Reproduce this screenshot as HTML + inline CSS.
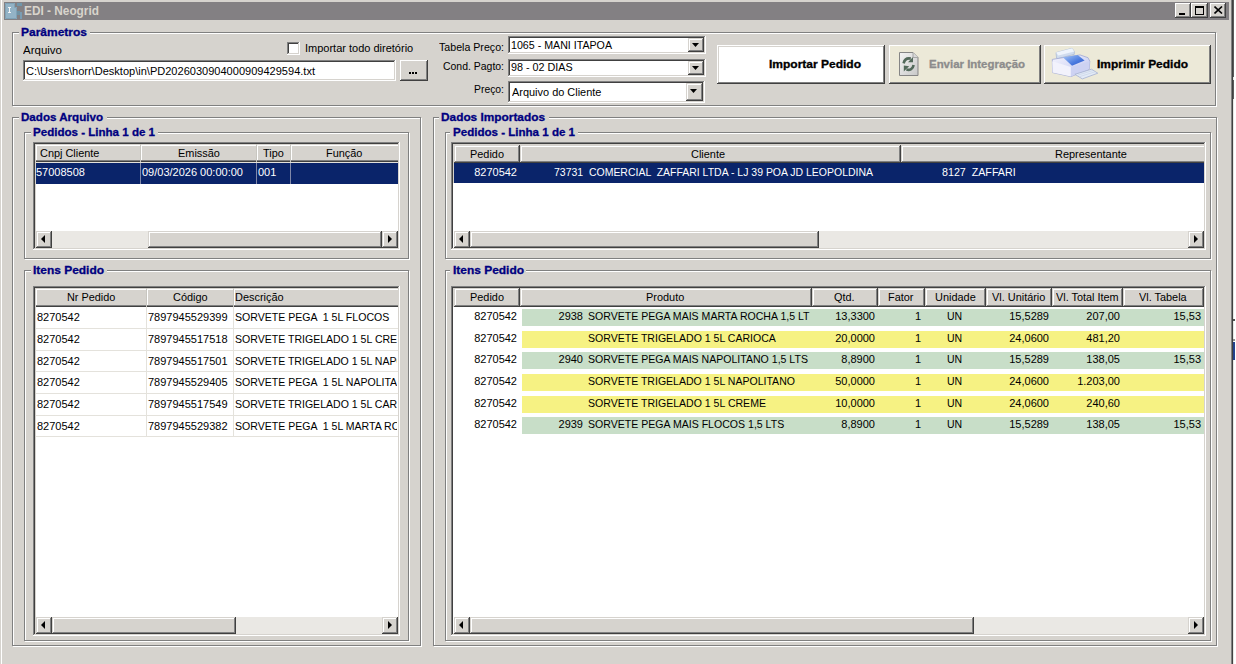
<!DOCTYPE html>
<html><head><meta charset="utf-8"><style>
html,body{margin:0;padding:0;width:1236px;height:664px;overflow:hidden;background:#D6D3CE;}
body div,body span{position:absolute;}
.t{font-family:"Liberation Sans",sans-serif;white-space:pre;}
</style></head><body>
<div style="left:0px;top:0px;width:1236px;height:664px;background:#D6D3CE;"></div>
<div style="left:0px;top:0px;width:1px;height:664px;background:#D6D3CE;"></div>
<div style="left:1px;top:0px;width:1px;height:664px;background:#FFFFFF;"></div>
<div style="left:1231px;top:0px;width:1px;height:664px;background:#808080;"></div>
<div style="left:1232px;top:0px;width:1px;height:664px;background:#404040;"></div>
<div style="left:1233px;top:0px;width:3px;height:664px;background:#FFFFFF;"></div>
<div style="left:1233px;top:0px;width:1px;height:664px;background:#E8E8E4;"></div>
<div style="left:1233px;top:0px;width:1px;height:77px;background:#5A5A5A;"></div>
<div style="left:1233px;top:80px;width:1px;height:19px;background:#5A5A5A;"></div>
<div style="left:1233px;top:319px;width:2px;height:2px;background:#505050;"></div>
<div style="left:1233px;top:339px;width:2px;height:2px;background:#909090;"></div>
<div style="left:1233px;top:342px;width:2px;height:18px;background:#23418C;"></div>
<div style="left:4px;top:2px;width:1225px;height:18px;background:#838083;"></div>
<svg style="position:absolute;left:4px;top:2px" width="20" height="18"><path d="M1 1H11V5H13V17H1Z" fill="#93B3C6"/><path d="M1.5 1.5H10.5V5.5H12.5V16.5H1.5Z" fill="none" stroke="#7FA2B6" stroke-width="1"/><rect x="13" y="1" width="5" height="3" fill="#7096AA"/><rect x="13" y="9" width="3" height="4" fill="#6F92A4"/><rect x="16" y="10" width="2" height="7" fill="#7A9CB2"/><path d="M4 5H7V6H6V10H7V11H4V10H5V6H4Z" fill="#F2F4F6"/></svg>
<span class="t" style="left:24.00px;top:5px;font-size:12px;line-height:12px;font-weight:bold;-webkit-text-stroke:0.3px #D8D4CC;color:#D8D4CC;transform:scaleX(0.9866);transform-origin:0 0;-webkit-text-stroke:0;">EDI - Neogrid</span>
<div style="left:1175px;top:3px;width:16px;height:15px;background:#D6D3CE;"></div>
<div style="left:1175px;top:3px;width:16px;height:1px;background:#FFFFFF;"></div>
<div style="left:1175px;top:3px;width:1px;height:15px;background:#FFFFFF;"></div>
<div style="left:1175px;top:17px;width:16px;height:1px;background:#404040;"></div>
<div style="left:1190px;top:3px;width:1px;height:15px;background:#404040;"></div>
<div style="left:1176px;top:4px;width:14px;height:1px;background:#D6D3CE;"></div>
<div style="left:1176px;top:4px;width:1px;height:13px;background:#D6D3CE;"></div>
<div style="left:1176px;top:16px;width:14px;height:1px;background:#808080;"></div>
<div style="left:1189px;top:4px;width:1px;height:13px;background:#808080;"></div>
<div style="left:1191px;top:3px;width:17px;height:15px;background:#D6D3CE;"></div>
<div style="left:1191px;top:3px;width:17px;height:1px;background:#FFFFFF;"></div>
<div style="left:1191px;top:3px;width:1px;height:15px;background:#FFFFFF;"></div>
<div style="left:1191px;top:17px;width:17px;height:1px;background:#404040;"></div>
<div style="left:1207px;top:3px;width:1px;height:15px;background:#404040;"></div>
<div style="left:1192px;top:4px;width:15px;height:1px;background:#D6D3CE;"></div>
<div style="left:1192px;top:4px;width:1px;height:13px;background:#D6D3CE;"></div>
<div style="left:1192px;top:16px;width:15px;height:1px;background:#808080;"></div>
<div style="left:1206px;top:4px;width:1px;height:13px;background:#808080;"></div>
<div style="left:1210px;top:3px;width:16px;height:15px;background:#D6D3CE;"></div>
<div style="left:1210px;top:3px;width:16px;height:1px;background:#FFFFFF;"></div>
<div style="left:1210px;top:3px;width:1px;height:15px;background:#FFFFFF;"></div>
<div style="left:1210px;top:17px;width:16px;height:1px;background:#404040;"></div>
<div style="left:1225px;top:3px;width:1px;height:15px;background:#404040;"></div>
<div style="left:1211px;top:4px;width:14px;height:1px;background:#D6D3CE;"></div>
<div style="left:1211px;top:4px;width:1px;height:13px;background:#D6D3CE;"></div>
<div style="left:1211px;top:16px;width:14px;height:1px;background:#808080;"></div>
<div style="left:1224px;top:4px;width:1px;height:13px;background:#808080;"></div>
<div style="left:1179px;top:13px;width:6px;height:2px;background:#000;"></div>
<div style="left:1195px;top:6px;width:9px;height:1px;background:#000;"></div>
<div style="left:1195px;top:6px;width:1px;height:9px;background:#000;"></div>
<div style="left:1195px;top:14px;width:9px;height:1px;background:#000;"></div>
<div style="left:1203px;top:6px;width:1px;height:9px;background:#000;"></div>
<div style="left:1195px;top:7px;width:9px;height:1px;background:#000;"></div>
<svg style="position:absolute;left:1214px;top:6px" width="9" height="8"><path d="M0.5 0.5L8 7.5M8 0.5L0.5 7.5" stroke="#000" stroke-width="1.6"/></svg>
<div style="left:13px;top:33px;width:1204px;height:1px;background:#FFFFFF;"></div>
<div style="left:13px;top:33px;width:1px;height:74px;background:#FFFFFF;"></div>
<div style="left:13px;top:106px;width:1204px;height:1px;background:#FFFFFF;"></div>
<div style="left:1216px;top:33px;width:1px;height:74px;background:#FFFFFF;"></div>
<div style="left:12px;top:32px;width:1204px;height:1px;background:#808080;"></div>
<div style="left:12px;top:32px;width:1px;height:74px;background:#808080;"></div>
<div style="left:12px;top:105px;width:1204px;height:1px;background:#808080;"></div>
<div style="left:1215px;top:32px;width:1px;height:74px;background:#808080;"></div>
<div style="left:13px;top:33px;width:1202px;height:1px;background:#FFFFFF;"></div>
<div style="left:13px;top:33px;width:1px;height:72px;background:#FFFFFF;"></div>
<div style="left:19px;top:27px;width:71px;height:10px;background:#D6D3CE;"></div>
<span class="t" style="left:21.00px;top:27px;font-size:11px;line-height:11px;font-weight:bold;-webkit-text-stroke:0.3px #000080;color:#000080;transform:scaleX(1.0901);transform-origin:0 0;">Parâmetros</span>
<span class="t" style="left:23.00px;top:45px;font-size:11px;line-height:11px;transform:scaleX(1.0457);transform-origin:0 0;">Arquivo</span>
<div style="left:287px;top:42px;width:13px;height:13px;background:#FFFFFF;"></div>
<div style="left:287px;top:42px;width:13px;height:1px;background:#808080;"></div>
<div style="left:287px;top:42px;width:1px;height:13px;background:#808080;"></div>
<div style="left:287px;top:54px;width:13px;height:1px;background:#FFFFFF;"></div>
<div style="left:299px;top:42px;width:1px;height:13px;background:#FFFFFF;"></div>
<div style="left:288px;top:43px;width:11px;height:1px;background:#404040;"></div>
<div style="left:288px;top:43px;width:1px;height:11px;background:#404040;"></div>
<div style="left:288px;top:53px;width:11px;height:1px;background:#D6D3CE;"></div>
<div style="left:298px;top:43px;width:1px;height:11px;background:#D6D3CE;"></div>
<span class="t" style="left:305.00px;top:43px;font-size:11px;line-height:11px;">Importar todo diretório</span>
<div style="left:23px;top:60px;width:373px;height:21px;background:#FFFFFF;"></div>
<div style="left:23px;top:60px;width:373px;height:1px;background:#808080;"></div>
<div style="left:23px;top:60px;width:1px;height:21px;background:#808080;"></div>
<div style="left:23px;top:80px;width:373px;height:1px;background:#FFFFFF;"></div>
<div style="left:395px;top:60px;width:1px;height:21px;background:#FFFFFF;"></div>
<div style="left:24px;top:61px;width:371px;height:1px;background:#404040;"></div>
<div style="left:24px;top:61px;width:1px;height:19px;background:#404040;"></div>
<div style="left:24px;top:79px;width:371px;height:1px;background:#D6D3CE;"></div>
<div style="left:394px;top:61px;width:1px;height:19px;background:#D6D3CE;"></div>
<span class="t" style="left:26.00px;top:66px;font-size:11px;line-height:11px;transform:scaleX(1.0034);transform-origin:0 0;">C:\Users\horr\Desktop\in\PD2026030904000909429594.txt</span>
<div style="left:400px;top:60px;width:28px;height:21px;background:#D6D3CE;"></div>
<div style="left:400px;top:60px;width:28px;height:1px;background:#FFFFFF;"></div>
<div style="left:400px;top:60px;width:1px;height:21px;background:#FFFFFF;"></div>
<div style="left:400px;top:80px;width:28px;height:1px;background:#404040;"></div>
<div style="left:427px;top:60px;width:1px;height:21px;background:#404040;"></div>
<div style="left:401px;top:61px;width:26px;height:1px;background:#D6D3CE;"></div>
<div style="left:401px;top:61px;width:1px;height:19px;background:#D6D3CE;"></div>
<div style="left:401px;top:79px;width:26px;height:1px;background:#808080;"></div>
<div style="left:426px;top:61px;width:1px;height:19px;background:#808080;"></div>
<div style="left:409px;top:72px;width:2px;height:2px;background:#000;"></div>
<div style="left:412px;top:72px;width:2px;height:2px;background:#000;"></div>
<div style="left:415px;top:72px;width:2px;height:2px;background:#000;"></div>
<span class="t" style="left:439.00px;top:42px;font-size:11px;line-height:11px;transform:scaleX(0.9663);transform-origin:0 0;">Tabela Preço:</span>
<span class="t" style="left:443.00px;top:61px;font-size:11px;line-height:11px;transform:scaleX(0.9499);transform-origin:0 0;">Cond. Pagto:</span>
<span class="t" style="left:474.00px;top:84px;font-size:11px;line-height:11px;transform:scaleX(0.9435);transform-origin:0 0;">Preço:</span>
<div style="left:508px;top:36px;width:198px;height:18px;background:#FFFFFF;"></div>
<div style="left:508px;top:36px;width:198px;height:1px;background:#808080;"></div>
<div style="left:508px;top:36px;width:1px;height:18px;background:#808080;"></div>
<div style="left:508px;top:53px;width:198px;height:1px;background:#FFFFFF;"></div>
<div style="left:705px;top:36px;width:1px;height:18px;background:#FFFFFF;"></div>
<div style="left:509px;top:37px;width:196px;height:1px;background:#404040;"></div>
<div style="left:509px;top:37px;width:1px;height:16px;background:#404040;"></div>
<div style="left:509px;top:52px;width:196px;height:1px;background:#D6D3CE;"></div>
<div style="left:704px;top:37px;width:1px;height:16px;background:#D6D3CE;"></div>
<div style="left:688px;top:38px;width:16px;height:14px;background:#D6D3CE;"></div>
<div style="left:688px;top:38px;width:16px;height:1px;background:#D6D3CE;"></div>
<div style="left:688px;top:38px;width:1px;height:14px;background:#D6D3CE;"></div>
<div style="left:688px;top:51px;width:16px;height:1px;background:#404040;"></div>
<div style="left:703px;top:38px;width:1px;height:14px;background:#404040;"></div>
<div style="left:689px;top:39px;width:14px;height:1px;background:#FFFFFF;"></div>
<div style="left:689px;top:39px;width:1px;height:12px;background:#FFFFFF;"></div>
<div style="left:689px;top:50px;width:14px;height:1px;background:#808080;"></div>
<div style="left:702px;top:39px;width:1px;height:12px;background:#808080;"></div>
<svg style="position:absolute;left:692px;top:43px" width="7" height="4"><path d="M0 0H7L3.5 4Z" fill="#000"/></svg>
<span class="t" style="left:511.00px;top:40px;font-size:11px;line-height:11px;transform:scaleX(0.9681);transform-origin:0 0;">1065 - MANI ITAPOA</span>
<div style="left:508px;top:59px;width:198px;height:18px;background:#FFFFFF;"></div>
<div style="left:508px;top:59px;width:198px;height:1px;background:#808080;"></div>
<div style="left:508px;top:59px;width:1px;height:18px;background:#808080;"></div>
<div style="left:508px;top:76px;width:198px;height:1px;background:#FFFFFF;"></div>
<div style="left:705px;top:59px;width:1px;height:18px;background:#FFFFFF;"></div>
<div style="left:509px;top:60px;width:196px;height:1px;background:#404040;"></div>
<div style="left:509px;top:60px;width:1px;height:16px;background:#404040;"></div>
<div style="left:509px;top:75px;width:196px;height:1px;background:#D6D3CE;"></div>
<div style="left:704px;top:60px;width:1px;height:16px;background:#D6D3CE;"></div>
<div style="left:688px;top:61px;width:16px;height:14px;background:#D6D3CE;"></div>
<div style="left:688px;top:61px;width:16px;height:1px;background:#D6D3CE;"></div>
<div style="left:688px;top:61px;width:1px;height:14px;background:#D6D3CE;"></div>
<div style="left:688px;top:74px;width:16px;height:1px;background:#404040;"></div>
<div style="left:703px;top:61px;width:1px;height:14px;background:#404040;"></div>
<div style="left:689px;top:62px;width:14px;height:1px;background:#FFFFFF;"></div>
<div style="left:689px;top:62px;width:1px;height:12px;background:#FFFFFF;"></div>
<div style="left:689px;top:73px;width:14px;height:1px;background:#808080;"></div>
<div style="left:702px;top:62px;width:1px;height:12px;background:#808080;"></div>
<svg style="position:absolute;left:692px;top:66px" width="7" height="4"><path d="M0 0H7L3.5 4Z" fill="#000"/></svg>
<span class="t" style="left:511.00px;top:62px;font-size:11px;line-height:11px;transform:scaleX(0.9800);transform-origin:0 0;">98 - 02 DIAS</span>
<div style="left:508px;top:81px;width:197px;height:22px;background:#FFFFFF;"></div>
<div style="left:508px;top:81px;width:197px;height:1px;background:#808080;"></div>
<div style="left:508px;top:81px;width:1px;height:22px;background:#808080;"></div>
<div style="left:508px;top:102px;width:197px;height:1px;background:#FFFFFF;"></div>
<div style="left:704px;top:81px;width:1px;height:22px;background:#FFFFFF;"></div>
<div style="left:509px;top:82px;width:195px;height:1px;background:#404040;"></div>
<div style="left:509px;top:82px;width:1px;height:20px;background:#404040;"></div>
<div style="left:509px;top:101px;width:195px;height:1px;background:#D6D3CE;"></div>
<div style="left:703px;top:82px;width:1px;height:20px;background:#D6D3CE;"></div>
<div style="left:686px;top:83px;width:17px;height:18px;background:#D6D3CE;"></div>
<div style="left:686px;top:83px;width:17px;height:1px;background:#D6D3CE;"></div>
<div style="left:686px;top:83px;width:1px;height:18px;background:#D6D3CE;"></div>
<div style="left:686px;top:100px;width:17px;height:1px;background:#404040;"></div>
<div style="left:702px;top:83px;width:1px;height:18px;background:#404040;"></div>
<div style="left:687px;top:84px;width:15px;height:1px;background:#FFFFFF;"></div>
<div style="left:687px;top:84px;width:1px;height:16px;background:#FFFFFF;"></div>
<div style="left:687px;top:99px;width:15px;height:1px;background:#808080;"></div>
<div style="left:701px;top:84px;width:1px;height:16px;background:#808080;"></div>
<svg style="position:absolute;left:690px;top:89px" width="7" height="4"><path d="M0 0H7L3.5 4Z" fill="#000"/></svg>
<span class="t" style="left:512.00px;top:87px;font-size:11px;line-height:11px;transform:scaleX(0.9944);transform-origin:0 0;">Arquivo do Cliente</span>
<div style="left:717px;top:45px;width:168px;height:39px;background:#FFFFFF;"></div>
<div style="left:717px;top:45px;width:168px;height:1px;background:#FFFFFF;"></div>
<div style="left:717px;top:45px;width:1px;height:39px;background:#FFFFFF;"></div>
<div style="left:717px;top:83px;width:168px;height:1px;background:#404040;"></div>
<div style="left:884px;top:45px;width:1px;height:39px;background:#404040;"></div>
<div style="left:718px;top:46px;width:166px;height:1px;background:#D6D3CE;"></div>
<div style="left:718px;top:46px;width:1px;height:37px;background:#D6D3CE;"></div>
<div style="left:718px;top:82px;width:166px;height:1px;background:#808080;"></div>
<div style="left:883px;top:46px;width:1px;height:37px;background:#808080;"></div>
<span class="t" style="left:769.00px;top:59px;font-size:11px;line-height:11px;font-weight:bold;-webkit-text-stroke:0.3px #000;transform:scaleX(1.0908);transform-origin:0 0;">Importar Pedido</span>
<div style="left:889px;top:45px;width:152px;height:39px;background:#ECE9D8;"></div>
<div style="left:889px;top:45px;width:152px;height:1px;background:#FFFFFF;"></div>
<div style="left:889px;top:45px;width:1px;height:39px;background:#FFFFFF;"></div>
<div style="left:889px;top:83px;width:152px;height:1px;background:#404040;"></div>
<div style="left:1040px;top:45px;width:1px;height:39px;background:#404040;"></div>
<div style="left:890px;top:46px;width:150px;height:1px;background:#ECE9D8;"></div>
<div style="left:890px;top:46px;width:1px;height:37px;background:#ECE9D8;"></div>
<div style="left:890px;top:82px;width:150px;height:1px;background:#808080;"></div>
<div style="left:1039px;top:46px;width:1px;height:37px;background:#808080;"></div>
<span class="t" style="left:929.00px;top:59px;font-size:11px;line-height:11px;font-weight:bold;-webkit-text-stroke:0.3px #8C8C8C;color:#8C8C8C;transform:scaleX(1.0398);transform-origin:0 0;">Enviar Integração</span>
<div style="left:1044px;top:45px;width:167px;height:39px;background:#ECE9D8;"></div>
<div style="left:1044px;top:45px;width:167px;height:1px;background:#FFFFFF;"></div>
<div style="left:1044px;top:45px;width:1px;height:39px;background:#FFFFFF;"></div>
<div style="left:1044px;top:83px;width:167px;height:1px;background:#404040;"></div>
<div style="left:1210px;top:45px;width:1px;height:39px;background:#404040;"></div>
<div style="left:1045px;top:46px;width:165px;height:1px;background:#ECE9D8;"></div>
<div style="left:1045px;top:46px;width:1px;height:37px;background:#ECE9D8;"></div>
<div style="left:1045px;top:82px;width:165px;height:1px;background:#808080;"></div>
<div style="left:1209px;top:46px;width:1px;height:37px;background:#808080;"></div>
<span class="t" style="left:1097.00px;top:59px;font-size:11px;line-height:11px;font-weight:bold;-webkit-text-stroke:0.3px #000;transform:scaleX(1.0866);transform-origin:0 0;">Imprimir Pedido</span>
<svg style="position:absolute;left:894px;top:48px" width="30" height="32"><defs><linearGradient id="dg" x1="0" y1="0" x2="1" y2="1"><stop offset="0" stop-color="#F4F4F4"/><stop offset="1" stop-color="#C8C8C8"/></linearGradient></defs><path d="M5.5 4.5H19L24 9.5V27.5H5.5Z" fill="url(#dg)" stroke="#858585"/><path d="M19 4.5V9.5H24" fill="#D8D8D8" stroke="#9A9A9A" stroke-width="0.8"/><path d="M9.6 15.4C10.5 11.5 13.5 10 16.8 10.6" stroke="#52695A" stroke-width="2.6" fill="none"/><path d="M14 14.2L19 9V14.2Z" fill="#52695A"/><path d="M19.6 17C19 21 16 22.6 12.4 21.6" stroke="#52695A" stroke-width="2.6" fill="none"/><path d="M9.8 17.6V23.6L15.2 18.3Z" fill="#52695A"/></svg>
<svg style="position:absolute;left:1050px;top:46px" width="50" height="36"><defs><linearGradient id="pb" x1="0" y1="0" x2="1" y2="1"><stop offset="0" stop-color="#F6F6FE"/><stop offset="1" stop-color="#BCC2EE"/></linearGradient><linearGradient id="pbl" x1="0" y1="0" x2="1" y2="1"><stop offset="0" stop-color="#A8C8F6"/><stop offset="0.6" stop-color="#4C7CE0"/><stop offset="1" stop-color="#2A56C8"/></linearGradient></defs><path d="M6 6.6L22 2.3L24.3 5.4L24.3 8.3L8.3 12.5L6.6 12.3Z" fill="#D0DCEE" stroke="#A8B8D4" stroke-width="0.7"/><path d="M6 6.6L22 2.3L24.3 5.4L8.3 9.4Z" fill="#EEF4FC"/><path d="M2.3 13.4L30 8.9L38 11.7L39.8 15.2L39.2 23.2L20.9 30.6L2.6 26.6Z" fill="url(#pb)" stroke="#A0A8D4" stroke-width="0.8"/><path d="M2.3 15.2L20.9 20.9L20.9 30.6L2.6 26.6Z" fill="#F2F2FC"/><path d="M20.9 20.9L39.6 15.2L39.2 23.2L20.9 30.6Z" fill="#CDD2F2"/><path d="M12.9 11.2L27.7 8.9L34.6 14.6L22 19.7Z" fill="url(#pbl)"/><path d="M24.9 28.3L41.5 23.2L47.8 27.2L32.3 32.9Z" fill="#E2EAF6" stroke="#A4B0D0" stroke-width="0.8"/><path d="M28 29L43 24.5M30 30.5L45 25.8" stroke="#C4D0E4" stroke-width="0.6"/></svg>
<div style="left:13px;top:118px;width:409px;height:1px;background:#FFFFFF;"></div>
<div style="left:13px;top:118px;width:1px;height:529px;background:#FFFFFF;"></div>
<div style="left:13px;top:646px;width:409px;height:1px;background:#FFFFFF;"></div>
<div style="left:421px;top:118px;width:1px;height:529px;background:#FFFFFF;"></div>
<div style="left:12px;top:117px;width:409px;height:1px;background:#808080;"></div>
<div style="left:12px;top:117px;width:1px;height:529px;background:#808080;"></div>
<div style="left:12px;top:645px;width:409px;height:1px;background:#808080;"></div>
<div style="left:420px;top:117px;width:1px;height:529px;background:#808080;"></div>
<div style="left:13px;top:118px;width:407px;height:1px;background:#FFFFFF;"></div>
<div style="left:13px;top:118px;width:1px;height:527px;background:#FFFFFF;"></div>
<div style="left:19px;top:112px;width:88px;height:10px;background:#D6D3CE;"></div>
<span class="t" style="left:21.00px;top:112px;font-size:11px;line-height:11px;font-weight:bold;-webkit-text-stroke:0.3px #000080;color:#000080;transform:scaleX(1.0536);transform-origin:0 0;">Dados Arquivo</span>
<div style="left:25px;top:133px;width:385px;height:1px;background:#FFFFFF;"></div>
<div style="left:25px;top:133px;width:1px;height:127px;background:#FFFFFF;"></div>
<div style="left:25px;top:259px;width:385px;height:1px;background:#FFFFFF;"></div>
<div style="left:409px;top:133px;width:1px;height:127px;background:#FFFFFF;"></div>
<div style="left:24px;top:132px;width:385px;height:1px;background:#808080;"></div>
<div style="left:24px;top:132px;width:1px;height:127px;background:#808080;"></div>
<div style="left:24px;top:258px;width:385px;height:1px;background:#808080;"></div>
<div style="left:408px;top:132px;width:1px;height:127px;background:#808080;"></div>
<div style="left:25px;top:133px;width:383px;height:1px;background:#FFFFFF;"></div>
<div style="left:25px;top:133px;width:1px;height:125px;background:#FFFFFF;"></div>
<div style="left:31px;top:127px;width:127px;height:10px;background:#D6D3CE;"></div>
<span class="t" style="left:33.00px;top:127px;font-size:11px;line-height:11px;font-weight:bold;-webkit-text-stroke:0.3px #000080;color:#000080;transform:scaleX(1.0505);transform-origin:0 0;">Pedidos - Linha 1 de 1</span>
<div style="left:25px;top:271px;width:385px;height:1px;background:#FFFFFF;"></div>
<div style="left:25px;top:271px;width:1px;height:371px;background:#FFFFFF;"></div>
<div style="left:25px;top:641px;width:385px;height:1px;background:#FFFFFF;"></div>
<div style="left:409px;top:271px;width:1px;height:371px;background:#FFFFFF;"></div>
<div style="left:24px;top:270px;width:385px;height:1px;background:#808080;"></div>
<div style="left:24px;top:270px;width:1px;height:371px;background:#808080;"></div>
<div style="left:24px;top:640px;width:385px;height:1px;background:#808080;"></div>
<div style="left:408px;top:270px;width:1px;height:371px;background:#808080;"></div>
<div style="left:25px;top:271px;width:383px;height:1px;background:#FFFFFF;"></div>
<div style="left:25px;top:271px;width:1px;height:369px;background:#FFFFFF;"></div>
<div style="left:31px;top:265px;width:76px;height:10px;background:#D6D3CE;"></div>
<span class="t" style="left:33.00px;top:265px;font-size:11px;line-height:11px;font-weight:bold;-webkit-text-stroke:0.3px #000080;color:#000080;transform:scaleX(1.0855);transform-origin:0 0;">Itens Pedido</span>
<div style="left:434px;top:118px;width:784px;height:1px;background:#FFFFFF;"></div>
<div style="left:434px;top:118px;width:1px;height:529px;background:#FFFFFF;"></div>
<div style="left:434px;top:646px;width:784px;height:1px;background:#FFFFFF;"></div>
<div style="left:1217px;top:118px;width:1px;height:529px;background:#FFFFFF;"></div>
<div style="left:433px;top:117px;width:784px;height:1px;background:#808080;"></div>
<div style="left:433px;top:117px;width:1px;height:529px;background:#808080;"></div>
<div style="left:433px;top:645px;width:784px;height:1px;background:#808080;"></div>
<div style="left:1216px;top:117px;width:1px;height:529px;background:#808080;"></div>
<div style="left:434px;top:118px;width:782px;height:1px;background:#FFFFFF;"></div>
<div style="left:434px;top:118px;width:1px;height:527px;background:#FFFFFF;"></div>
<div style="left:439px;top:112px;width:110px;height:10px;background:#D6D3CE;"></div>
<span class="t" style="left:441.00px;top:112px;font-size:11px;line-height:11px;font-weight:bold;-webkit-text-stroke:0.3px #000080;color:#000080;transform:scaleX(1.0768);transform-origin:0 0;">Dados Importados</span>
<div style="left:446px;top:133px;width:766px;height:1px;background:#FFFFFF;"></div>
<div style="left:446px;top:133px;width:1px;height:127px;background:#FFFFFF;"></div>
<div style="left:446px;top:259px;width:766px;height:1px;background:#FFFFFF;"></div>
<div style="left:1211px;top:133px;width:1px;height:127px;background:#FFFFFF;"></div>
<div style="left:445px;top:132px;width:766px;height:1px;background:#808080;"></div>
<div style="left:445px;top:132px;width:1px;height:127px;background:#808080;"></div>
<div style="left:445px;top:258px;width:766px;height:1px;background:#808080;"></div>
<div style="left:1210px;top:132px;width:1px;height:127px;background:#808080;"></div>
<div style="left:446px;top:133px;width:764px;height:1px;background:#FFFFFF;"></div>
<div style="left:446px;top:133px;width:1px;height:125px;background:#FFFFFF;"></div>
<div style="left:450px;top:127px;width:128px;height:10px;background:#D6D3CE;"></div>
<span class="t" style="left:453.00px;top:127px;font-size:11px;line-height:11px;font-weight:bold;-webkit-text-stroke:0.3px #000080;color:#000080;transform:scaleX(1.0505);transform-origin:0 0;">Pedidos - Linha 1 de 1</span>
<div style="left:446px;top:271px;width:766px;height:1px;background:#FFFFFF;"></div>
<div style="left:446px;top:271px;width:1px;height:371px;background:#FFFFFF;"></div>
<div style="left:446px;top:641px;width:766px;height:1px;background:#FFFFFF;"></div>
<div style="left:1211px;top:271px;width:1px;height:371px;background:#FFFFFF;"></div>
<div style="left:445px;top:270px;width:766px;height:1px;background:#808080;"></div>
<div style="left:445px;top:270px;width:1px;height:371px;background:#808080;"></div>
<div style="left:445px;top:640px;width:766px;height:1px;background:#808080;"></div>
<div style="left:1210px;top:270px;width:1px;height:371px;background:#808080;"></div>
<div style="left:446px;top:271px;width:764px;height:1px;background:#FFFFFF;"></div>
<div style="left:446px;top:271px;width:1px;height:369px;background:#FFFFFF;"></div>
<div style="left:450px;top:265px;width:76px;height:10px;background:#D6D3CE;"></div>
<span class="t" style="left:453.00px;top:265px;font-size:11px;line-height:11px;font-weight:bold;-webkit-text-stroke:0.3px #000080;color:#000080;transform:scaleX(1.0855);transform-origin:0 0;">Itens Pedido</span>
<div style="left:33px;top:142px;width:367px;height:108px;background:#FFFFFF;"></div>
<div style="left:33px;top:142px;width:367px;height:1px;background:#808080;"></div>
<div style="left:33px;top:142px;width:1px;height:108px;background:#808080;"></div>
<div style="left:33px;top:249px;width:367px;height:1px;background:#FFFFFF;"></div>
<div style="left:399px;top:142px;width:1px;height:108px;background:#FFFFFF;"></div>
<div style="left:34px;top:143px;width:365px;height:1px;background:#404040;"></div>
<div style="left:34px;top:143px;width:1px;height:106px;background:#404040;"></div>
<div style="left:34px;top:248px;width:365px;height:1px;background:#D6D3CE;"></div>
<div style="left:398px;top:143px;width:1px;height:106px;background:#D6D3CE;"></div>
<div style="left:35px;top:144px;width:1px;height:104px;background:#D6D3CE;"></div>
<div style="left:35px;top:144px;width:363px;height:1px;background:#D6D3CE;"></div>
<div style="left:36px;top:144px;width:362px;height:18px;background:#D6D3CE;"></div>
<div style="left:36px;top:145px;width:362px;height:1px;background:#FFFFFF;"></div>
<div style="left:36px;top:145px;width:1px;height:15px;background:#FFFFFF;"></div>
<div style="left:36px;top:160px;width:362px;height:1px;background:#808080;"></div>
<div style="left:36px;top:161px;width:362px;height:1px;background:#404040;"></div>
<div style="left:140px;top:144px;width:1px;height:18px;background:#C8C6C0;"></div>
<div style="left:141px;top:145px;width:1px;height:15px;background:#FFFFFF;"></div>
<div style="left:256px;top:144px;width:1px;height:18px;background:#C8C6C0;"></div>
<div style="left:257px;top:145px;width:1px;height:15px;background:#FFFFFF;"></div>
<div style="left:290px;top:144px;width:1px;height:18px;background:#C8C6C0;"></div>
<div style="left:291px;top:145px;width:1px;height:15px;background:#FFFFFF;"></div>
<div style="left:36px;top:162px;width:362px;height:1px;background:#E4E2DC;"></div>
<span class="t" style="left:40.00px;top:148px;font-size:11px;line-height:11px;transform:scaleX(0.9918);transform-origin:0 0;">Cnpj Cliente</span>
<span class="t" style="left:178.04px;top:148px;font-size:11px;line-height:11px;transform:scaleX(0.9936);transform-origin:0 0;">Emissão</span>
<span class="t" style="left:263.00px;top:148px;font-size:11px;line-height:11px;transform:scaleX(0.9888);transform-origin:0 0;">Tipo</span>
<span class="t" style="left:325.79px;top:148px;font-size:11px;line-height:11px;transform:scaleX(0.9925);transform-origin:0 0;">Função</span>
<div style="left:36px;top:163px;width:362px;height:21px;background:#0A246A;"></div>
<div style="left:140px;top:163px;width:1px;height:21px;background:#8088A8;"></div>
<div style="left:256px;top:163px;width:1px;height:21px;background:#8088A8;"></div>
<div style="left:290px;top:163px;width:1px;height:21px;background:#8088A8;"></div>
<span class="t" style="left:36.00px;top:167px;font-size:11px;line-height:11px;color:#FFFFFF;">57008508</span>
<span class="t" style="left:142.00px;top:167px;font-size:11px;line-height:11px;color:#FFFFFF;">09/03/2026 00:00:00</span>
<span class="t" style="left:258.00px;top:167px;font-size:11px;line-height:11px;color:#FFFFFF;">001</span>
<div style="left:36px;top:231px;width:362px;height:17px;background:#EAE8E4"></div>
<div style="left:36px;top:231px;width:16px;height:17px;background:#D6D3CE;"></div>
<div style="left:36px;top:231px;width:16px;height:1px;background:#D6D3CE;"></div>
<div style="left:36px;top:231px;width:1px;height:17px;background:#D6D3CE;"></div>
<div style="left:36px;top:247px;width:16px;height:1px;background:#404040;"></div>
<div style="left:51px;top:231px;width:1px;height:17px;background:#404040;"></div>
<div style="left:37px;top:232px;width:14px;height:1px;background:#FFFFFF;"></div>
<div style="left:37px;top:232px;width:1px;height:15px;background:#FFFFFF;"></div>
<div style="left:37px;top:246px;width:14px;height:1px;background:#808080;"></div>
<div style="left:50px;top:232px;width:1px;height:15px;background:#808080;"></div>
<svg style="position:absolute;left:41px;top:235px" width="5" height="8"><path d="M4 0V8L0 4Z" fill="#000"/></svg>
<div style="left:382px;top:231px;width:16px;height:17px;background:#D6D3CE;"></div>
<div style="left:382px;top:231px;width:16px;height:1px;background:#D6D3CE;"></div>
<div style="left:382px;top:231px;width:1px;height:17px;background:#D6D3CE;"></div>
<div style="left:382px;top:247px;width:16px;height:1px;background:#404040;"></div>
<div style="left:397px;top:231px;width:1px;height:17px;background:#404040;"></div>
<div style="left:383px;top:232px;width:14px;height:1px;background:#FFFFFF;"></div>
<div style="left:383px;top:232px;width:1px;height:15px;background:#FFFFFF;"></div>
<div style="left:383px;top:246px;width:14px;height:1px;background:#808080;"></div>
<div style="left:396px;top:232px;width:1px;height:15px;background:#808080;"></div>
<svg style="position:absolute;left:388px;top:235px" width="5" height="8"><path d="M0 0V8L4 4Z" fill="#000"/></svg>
<div style="left:148px;top:231px;width:234px;height:17px;background:#D6D3CE;"></div>
<div style="left:148px;top:231px;width:234px;height:1px;background:#D6D3CE;"></div>
<div style="left:148px;top:231px;width:1px;height:17px;background:#D6D3CE;"></div>
<div style="left:148px;top:247px;width:234px;height:1px;background:#404040;"></div>
<div style="left:381px;top:231px;width:1px;height:17px;background:#404040;"></div>
<div style="left:149px;top:232px;width:232px;height:1px;background:#FFFFFF;"></div>
<div style="left:149px;top:232px;width:1px;height:15px;background:#FFFFFF;"></div>
<div style="left:149px;top:246px;width:232px;height:1px;background:#808080;"></div>
<div style="left:380px;top:232px;width:1px;height:15px;background:#808080;"></div>
<div style="left:33px;top:286px;width:367px;height:350px;background:#FFFFFF;"></div>
<div style="left:33px;top:286px;width:367px;height:1px;background:#808080;"></div>
<div style="left:33px;top:286px;width:1px;height:350px;background:#808080;"></div>
<div style="left:33px;top:635px;width:367px;height:1px;background:#FFFFFF;"></div>
<div style="left:399px;top:286px;width:1px;height:350px;background:#FFFFFF;"></div>
<div style="left:34px;top:287px;width:365px;height:1px;background:#404040;"></div>
<div style="left:34px;top:287px;width:1px;height:348px;background:#404040;"></div>
<div style="left:34px;top:634px;width:365px;height:1px;background:#D6D3CE;"></div>
<div style="left:398px;top:287px;width:1px;height:348px;background:#D6D3CE;"></div>
<div style="left:35px;top:288px;width:1px;height:346px;background:#D6D3CE;"></div>
<div style="left:35px;top:633px;width:364px;height:1px;background:#D6D3CE;"></div>
<div style="left:35px;top:288px;width:363px;height:1px;background:#D6D3CE;"></div>
<div style="left:36px;top:288px;width:362px;height:19px;background:#D6D3CE;"></div>
<div style="left:36px;top:289px;width:362px;height:1px;background:#FFFFFF;"></div>
<div style="left:36px;top:289px;width:1px;height:16px;background:#FFFFFF;"></div>
<div style="left:36px;top:305px;width:362px;height:1px;background:#808080;"></div>
<div style="left:36px;top:306px;width:362px;height:1px;background:#404040;"></div>
<div style="left:146px;top:288px;width:1px;height:19px;background:#C8C6C0;"></div>
<div style="left:147px;top:289px;width:1px;height:16px;background:#FFFFFF;"></div>
<div style="left:233px;top:288px;width:1px;height:19px;background:#C8C6C0;"></div>
<div style="left:234px;top:289px;width:1px;height:16px;background:#FFFFFF;"></div>
<span class="t" style="left:66.81px;top:292px;font-size:11px;line-height:11px;transform:scaleX(0.9888);transform-origin:0 0;">Nr Pedido</span>
<span class="t" style="left:172.70px;top:292px;font-size:11px;line-height:11px;transform:scaleX(0.9925);transform-origin:0 0;">Código</span>
<span class="t" style="left:235.00px;top:292px;font-size:11px;line-height:11px;transform:scaleX(0.9950);transform-origin:0 0;">Descrição</span>
<div style="left:36px;top:328px;width:362px;height:1px;background:#E4E2DC;"></div>
<span class="t" style="left:37.00px;top:312px;font-size:11px;line-height:11px;">8270542</span>
<span class="t" style="left:148.00px;top:312px;font-size:11px;line-height:11px;">7897945529399</span>
<div style="left:234px;top:307px;width:163px;height:20px;overflow:hidden"><span class="t" style="left:1.00px;top:5px;font-size:11px;line-height:11px;transform:scaleX(0.9595);transform-origin:0 0;">SORVETE PEGA  1 5L FLOCOS</span></div>
<div style="left:36px;top:350px;width:362px;height:1px;background:#E4E2DC;"></div>
<span class="t" style="left:37.00px;top:334px;font-size:11px;line-height:11px;">8270542</span>
<span class="t" style="left:148.00px;top:334px;font-size:11px;line-height:11px;">7897945517518</span>
<div style="left:234px;top:329px;width:163px;height:20px;overflow:hidden"><span class="t" style="left:1.00px;top:5px;font-size:11px;line-height:11px;transform:scaleX(0.9587);transform-origin:0 0;">SORVETE TRIGELADO 1 5L CREME</span></div>
<div style="left:36px;top:371px;width:362px;height:1px;background:#E4E2DC;"></div>
<span class="t" style="left:37.00px;top:356px;font-size:11px;line-height:11px;">8270542</span>
<span class="t" style="left:148.00px;top:356px;font-size:11px;line-height:11px;">7897945517501</span>
<div style="left:234px;top:351px;width:163px;height:20px;overflow:hidden"><span class="t" style="left:1.00px;top:5px;font-size:11px;line-height:11px;transform:scaleX(0.9581);transform-origin:0 0;">SORVETE TRIGELADO 1 5L NAPOLITANO</span></div>
<div style="left:36px;top:393px;width:362px;height:1px;background:#E4E2DC;"></div>
<span class="t" style="left:37.00px;top:377px;font-size:11px;line-height:11px;">8270542</span>
<span class="t" style="left:148.00px;top:377px;font-size:11px;line-height:11px;">7897945529405</span>
<div style="left:234px;top:372px;width:163px;height:20px;overflow:hidden"><span class="t" style="left:1.00px;top:5px;font-size:11px;line-height:11px;transform:scaleX(0.9587);transform-origin:0 0;">SORVETE PEGA  1 5L NAPOLITANO</span></div>
<div style="left:36px;top:415px;width:362px;height:1px;background:#E4E2DC;"></div>
<span class="t" style="left:37.00px;top:399px;font-size:11px;line-height:11px;">8270542</span>
<span class="t" style="left:148.00px;top:399px;font-size:11px;line-height:11px;">7897945517549</span>
<div style="left:234px;top:394px;width:163px;height:20px;overflow:hidden"><span class="t" style="left:1.00px;top:5px;font-size:11px;line-height:11px;transform:scaleX(0.9585);transform-origin:0 0;">SORVETE TRIGELADO 1 5L CARIOCA</span></div>
<div style="left:36px;top:436px;width:362px;height:1px;background:#E4E2DC;"></div>
<span class="t" style="left:37.00px;top:421px;font-size:11px;line-height:11px;">8270542</span>
<span class="t" style="left:148.00px;top:421px;font-size:11px;line-height:11px;">7897945529382</span>
<div style="left:234px;top:416px;width:163px;height:20px;overflow:hidden"><span class="t" style="left:1.00px;top:5px;font-size:11px;line-height:11px;transform:scaleX(0.9587);transform-origin:0 0;">SORVETE PEGA  1 5L MARTA ROCHA</span></div>
<div style="left:146px;top:307px;width:1px;height:130px;background:#E4E2DC;"></div>
<div style="left:233px;top:307px;width:1px;height:130px;background:#E4E2DC;"></div>
<div style="left:36px;top:617px;width:362px;height:17px;background:#EAE8E4"></div>
<div style="left:36px;top:617px;width:16px;height:17px;background:#D6D3CE;"></div>
<div style="left:36px;top:617px;width:16px;height:1px;background:#D6D3CE;"></div>
<div style="left:36px;top:617px;width:1px;height:17px;background:#D6D3CE;"></div>
<div style="left:36px;top:633px;width:16px;height:1px;background:#404040;"></div>
<div style="left:51px;top:617px;width:1px;height:17px;background:#404040;"></div>
<div style="left:37px;top:618px;width:14px;height:1px;background:#FFFFFF;"></div>
<div style="left:37px;top:618px;width:1px;height:15px;background:#FFFFFF;"></div>
<div style="left:37px;top:632px;width:14px;height:1px;background:#808080;"></div>
<div style="left:50px;top:618px;width:1px;height:15px;background:#808080;"></div>
<svg style="position:absolute;left:41px;top:621px" width="5" height="8"><path d="M4 0V8L0 4Z" fill="#000"/></svg>
<div style="left:382px;top:617px;width:16px;height:17px;background:#D6D3CE;"></div>
<div style="left:382px;top:617px;width:16px;height:1px;background:#D6D3CE;"></div>
<div style="left:382px;top:617px;width:1px;height:17px;background:#D6D3CE;"></div>
<div style="left:382px;top:633px;width:16px;height:1px;background:#404040;"></div>
<div style="left:397px;top:617px;width:1px;height:17px;background:#404040;"></div>
<div style="left:383px;top:618px;width:14px;height:1px;background:#FFFFFF;"></div>
<div style="left:383px;top:618px;width:1px;height:15px;background:#FFFFFF;"></div>
<div style="left:383px;top:632px;width:14px;height:1px;background:#808080;"></div>
<div style="left:396px;top:618px;width:1px;height:15px;background:#808080;"></div>
<svg style="position:absolute;left:388px;top:621px" width="5" height="8"><path d="M0 0V8L4 4Z" fill="#000"/></svg>
<div style="left:52px;top:617px;width:184px;height:17px;background:#D6D3CE;"></div>
<div style="left:52px;top:617px;width:184px;height:1px;background:#D6D3CE;"></div>
<div style="left:52px;top:617px;width:1px;height:17px;background:#D6D3CE;"></div>
<div style="left:52px;top:633px;width:184px;height:1px;background:#404040;"></div>
<div style="left:235px;top:617px;width:1px;height:17px;background:#404040;"></div>
<div style="left:53px;top:618px;width:182px;height:1px;background:#FFFFFF;"></div>
<div style="left:53px;top:618px;width:1px;height:15px;background:#FFFFFF;"></div>
<div style="left:53px;top:632px;width:182px;height:1px;background:#808080;"></div>
<div style="left:234px;top:618px;width:1px;height:15px;background:#808080;"></div>
<div style="left:451px;top:142px;width:755px;height:108px;background:#FFFFFF;"></div>
<div style="left:451px;top:142px;width:755px;height:1px;background:#808080;"></div>
<div style="left:451px;top:142px;width:1px;height:108px;background:#808080;"></div>
<div style="left:451px;top:249px;width:755px;height:1px;background:#FFFFFF;"></div>
<div style="left:1205px;top:142px;width:1px;height:108px;background:#FFFFFF;"></div>
<div style="left:452px;top:143px;width:753px;height:1px;background:#404040;"></div>
<div style="left:452px;top:143px;width:1px;height:106px;background:#404040;"></div>
<div style="left:452px;top:248px;width:753px;height:1px;background:#D6D3CE;"></div>
<div style="left:1204px;top:143px;width:1px;height:106px;background:#D6D3CE;"></div>
<div style="left:453px;top:144px;width:751px;height:19px;background:#D6D3CE;"></div>
<div style="left:454px;top:145px;width:66px;height:18px;background:#D6D3CE;"></div>
<div style="left:454px;top:145px;width:66px;height:1px;background:#D6D3CE;"></div>
<div style="left:454px;top:145px;width:1px;height:18px;background:#D6D3CE;"></div>
<div style="left:454px;top:162px;width:66px;height:1px;background:#404040;"></div>
<div style="left:519px;top:145px;width:1px;height:18px;background:#404040;"></div>
<div style="left:455px;top:146px;width:64px;height:1px;background:#FFFFFF;"></div>
<div style="left:455px;top:146px;width:1px;height:16px;background:#FFFFFF;"></div>
<div style="left:455px;top:161px;width:64px;height:1px;background:#808080;"></div>
<div style="left:518px;top:146px;width:1px;height:16px;background:#808080;"></div>
<div style="left:520px;top:145px;width:381px;height:18px;background:#D6D3CE;"></div>
<div style="left:520px;top:145px;width:381px;height:1px;background:#D6D3CE;"></div>
<div style="left:520px;top:145px;width:1px;height:18px;background:#D6D3CE;"></div>
<div style="left:520px;top:162px;width:381px;height:1px;background:#404040;"></div>
<div style="left:900px;top:145px;width:1px;height:18px;background:#404040;"></div>
<div style="left:521px;top:146px;width:379px;height:1px;background:#FFFFFF;"></div>
<div style="left:521px;top:146px;width:1px;height:16px;background:#FFFFFF;"></div>
<div style="left:521px;top:161px;width:379px;height:1px;background:#808080;"></div>
<div style="left:899px;top:146px;width:1px;height:16px;background:#808080;"></div>
<div style="left:901px;top:145px;width:305px;height:18px;background:#D6D3CE;"></div>
<div style="left:901px;top:145px;width:305px;height:1px;background:#D6D3CE;"></div>
<div style="left:901px;top:145px;width:1px;height:18px;background:#D6D3CE;"></div>
<div style="left:901px;top:162px;width:305px;height:1px;background:#404040;"></div>
<div style="left:1205px;top:145px;width:1px;height:18px;background:#404040;"></div>
<div style="left:902px;top:146px;width:303px;height:1px;background:#FFFFFF;"></div>
<div style="left:902px;top:146px;width:1px;height:16px;background:#FFFFFF;"></div>
<div style="left:902px;top:161px;width:303px;height:1px;background:#808080;"></div>
<div style="left:1204px;top:146px;width:1px;height:16px;background:#808080;"></div>
<div style="left:1204px;top:144px;width:1px;height:105px;background:#D6D3CE;"></div>
<div style="left:1205px;top:142px;width:1px;height:108px;background:#FFFFFF;"></div>
<span class="t" style="left:470.00px;top:149px;font-size:11px;line-height:11px;transform:scaleX(0.9925);transform-origin:0 0;">Pedido</span>
<span class="t" style="left:690.99px;top:149px;font-size:11px;line-height:11px;transform:scaleX(0.9936);transform-origin:0 0;">Cliente</span>
<span class="t" style="left:1055.00px;top:149px;font-size:11px;line-height:11px;transform:scaleX(0.9965);transform-origin:0 0;">Representante</span>
<div style="left:453px;top:163px;width:751px;height:20px;background:#0A246A;"></div>
<div style="left:453px;top:163px;width:1px;height:20px;background:#D6D3CE;"></div>
<span class="t" style="left:474.17px;top:167px;font-size:11px;line-height:11px;color:#FFFFFF;">8270542</span>
<span class="t" style="left:554.00px;top:167px;font-size:11px;line-height:11px;color:#FFFFFF;transform:scaleX(0.9522);transform-origin:0 0;">73731  COMERCIAL  ZAFFARI LTDA - LJ 39 POA JD LEOPOLDINA</span>
<span class="t" style="left:942.00px;top:167px;font-size:11px;line-height:11px;color:#FFFFFF;transform:scaleX(0.9714);transform-origin:0 0;">8127  ZAFFARI</span>
<div style="left:454px;top:231px;width:750px;height:17px;background:#EAE8E4"></div>
<div style="left:454px;top:231px;width:16px;height:17px;background:#D6D3CE;"></div>
<div style="left:454px;top:231px;width:16px;height:1px;background:#D6D3CE;"></div>
<div style="left:454px;top:231px;width:1px;height:17px;background:#D6D3CE;"></div>
<div style="left:454px;top:247px;width:16px;height:1px;background:#404040;"></div>
<div style="left:469px;top:231px;width:1px;height:17px;background:#404040;"></div>
<div style="left:455px;top:232px;width:14px;height:1px;background:#FFFFFF;"></div>
<div style="left:455px;top:232px;width:1px;height:15px;background:#FFFFFF;"></div>
<div style="left:455px;top:246px;width:14px;height:1px;background:#808080;"></div>
<div style="left:468px;top:232px;width:1px;height:15px;background:#808080;"></div>
<svg style="position:absolute;left:459px;top:235px" width="5" height="8"><path d="M4 0V8L0 4Z" fill="#000"/></svg>
<div style="left:1188px;top:231px;width:16px;height:17px;background:#D6D3CE;"></div>
<div style="left:1188px;top:231px;width:16px;height:1px;background:#D6D3CE;"></div>
<div style="left:1188px;top:231px;width:1px;height:17px;background:#D6D3CE;"></div>
<div style="left:1188px;top:247px;width:16px;height:1px;background:#404040;"></div>
<div style="left:1203px;top:231px;width:1px;height:17px;background:#404040;"></div>
<div style="left:1189px;top:232px;width:14px;height:1px;background:#FFFFFF;"></div>
<div style="left:1189px;top:232px;width:1px;height:15px;background:#FFFFFF;"></div>
<div style="left:1189px;top:246px;width:14px;height:1px;background:#808080;"></div>
<div style="left:1202px;top:232px;width:1px;height:15px;background:#808080;"></div>
<svg style="position:absolute;left:1194px;top:235px" width="5" height="8"><path d="M0 0V8L4 4Z" fill="#000"/></svg>
<div style="left:470px;top:231px;width:349px;height:17px;background:#D6D3CE;"></div>
<div style="left:470px;top:231px;width:349px;height:1px;background:#D6D3CE;"></div>
<div style="left:470px;top:231px;width:1px;height:17px;background:#D6D3CE;"></div>
<div style="left:470px;top:247px;width:349px;height:1px;background:#404040;"></div>
<div style="left:818px;top:231px;width:1px;height:17px;background:#404040;"></div>
<div style="left:471px;top:232px;width:347px;height:1px;background:#FFFFFF;"></div>
<div style="left:471px;top:232px;width:1px;height:15px;background:#FFFFFF;"></div>
<div style="left:471px;top:246px;width:347px;height:1px;background:#808080;"></div>
<div style="left:817px;top:232px;width:1px;height:15px;background:#808080;"></div>
<div style="left:451px;top:286px;width:755px;height:350px;background:#FFFFFF;"></div>
<div style="left:451px;top:286px;width:755px;height:1px;background:#808080;"></div>
<div style="left:451px;top:286px;width:1px;height:350px;background:#808080;"></div>
<div style="left:451px;top:635px;width:755px;height:1px;background:#FFFFFF;"></div>
<div style="left:1205px;top:286px;width:1px;height:350px;background:#FFFFFF;"></div>
<div style="left:452px;top:287px;width:753px;height:1px;background:#404040;"></div>
<div style="left:452px;top:287px;width:1px;height:348px;background:#404040;"></div>
<div style="left:452px;top:634px;width:753px;height:1px;background:#D6D3CE;"></div>
<div style="left:1204px;top:287px;width:1px;height:348px;background:#D6D3CE;"></div>
<div style="left:453px;top:633px;width:752px;height:1px;background:#D6D3CE;"></div>
<div style="left:453px;top:288px;width:751px;height:19px;background:#D6D3CE;"></div>
<div style="left:454px;top:288px;width:66px;height:19px;background:#D6D3CE;"></div>
<div style="left:454px;top:288px;width:66px;height:1px;background:#D6D3CE;"></div>
<div style="left:454px;top:288px;width:1px;height:19px;background:#D6D3CE;"></div>
<div style="left:454px;top:306px;width:66px;height:1px;background:#404040;"></div>
<div style="left:519px;top:288px;width:1px;height:19px;background:#404040;"></div>
<div style="left:455px;top:289px;width:64px;height:1px;background:#FFFFFF;"></div>
<div style="left:455px;top:289px;width:1px;height:17px;background:#FFFFFF;"></div>
<div style="left:455px;top:305px;width:64px;height:1px;background:#808080;"></div>
<div style="left:518px;top:289px;width:1px;height:17px;background:#808080;"></div>
<span class="t" style="left:469.50px;top:292px;font-size:11px;line-height:11px;transform:scaleX(0.9925);transform-origin:0 0;">Pedido</span>
<div style="left:520px;top:288px;width:292px;height:19px;background:#D6D3CE;"></div>
<div style="left:520px;top:288px;width:292px;height:1px;background:#D6D3CE;"></div>
<div style="left:520px;top:288px;width:1px;height:19px;background:#D6D3CE;"></div>
<div style="left:520px;top:306px;width:292px;height:1px;background:#404040;"></div>
<div style="left:811px;top:288px;width:1px;height:19px;background:#404040;"></div>
<div style="left:521px;top:289px;width:290px;height:1px;background:#FFFFFF;"></div>
<div style="left:521px;top:289px;width:1px;height:17px;background:#FFFFFF;"></div>
<div style="left:521px;top:305px;width:290px;height:1px;background:#808080;"></div>
<div style="left:810px;top:289px;width:1px;height:17px;background:#808080;"></div>
<span class="t" style="left:646.36px;top:292px;font-size:11px;line-height:11px;transform:scaleX(0.9936);transform-origin:0 0;">Produto</span>
<div style="left:812px;top:288px;width:66px;height:19px;background:#D6D3CE;"></div>
<div style="left:812px;top:288px;width:66px;height:1px;background:#D6D3CE;"></div>
<div style="left:812px;top:288px;width:1px;height:19px;background:#D6D3CE;"></div>
<div style="left:812px;top:306px;width:66px;height:1px;background:#404040;"></div>
<div style="left:877px;top:288px;width:1px;height:19px;background:#404040;"></div>
<div style="left:813px;top:289px;width:64px;height:1px;background:#FFFFFF;"></div>
<div style="left:813px;top:289px;width:1px;height:17px;background:#FFFFFF;"></div>
<div style="left:813px;top:305px;width:64px;height:1px;background:#808080;"></div>
<div style="left:876px;top:289px;width:1px;height:17px;background:#808080;"></div>
<span class="t" style="left:834.22px;top:292px;font-size:11px;line-height:11px;transform:scaleX(0.9888);transform-origin:0 0;">Qtd.</span>
<div style="left:878px;top:288px;width:47px;height:19px;background:#D6D3CE;"></div>
<div style="left:878px;top:288px;width:47px;height:1px;background:#D6D3CE;"></div>
<div style="left:878px;top:288px;width:1px;height:19px;background:#D6D3CE;"></div>
<div style="left:878px;top:306px;width:47px;height:1px;background:#404040;"></div>
<div style="left:924px;top:288px;width:1px;height:19px;background:#404040;"></div>
<div style="left:879px;top:289px;width:45px;height:1px;background:#FFFFFF;"></div>
<div style="left:879px;top:289px;width:1px;height:17px;background:#FFFFFF;"></div>
<div style="left:879px;top:305px;width:45px;height:1px;background:#808080;"></div>
<div style="left:923px;top:289px;width:1px;height:17px;background:#808080;"></div>
<span class="t" style="left:888.27px;top:292px;font-size:11px;line-height:11px;transform:scaleX(0.9910);transform-origin:0 0;">Fator</span>
<div style="left:925px;top:288px;width:61px;height:19px;background:#D6D3CE;"></div>
<div style="left:925px;top:288px;width:61px;height:1px;background:#D6D3CE;"></div>
<div style="left:925px;top:288px;width:1px;height:19px;background:#D6D3CE;"></div>
<div style="left:925px;top:306px;width:61px;height:1px;background:#404040;"></div>
<div style="left:985px;top:288px;width:1px;height:19px;background:#404040;"></div>
<div style="left:926px;top:289px;width:59px;height:1px;background:#FFFFFF;"></div>
<div style="left:926px;top:289px;width:1px;height:17px;background:#FFFFFF;"></div>
<div style="left:926px;top:305px;width:59px;height:1px;background:#808080;"></div>
<div style="left:984px;top:289px;width:1px;height:17px;background:#808080;"></div>
<span class="t" style="left:934.64px;top:292px;font-size:11px;line-height:11px;transform:scaleX(0.9936);transform-origin:0 0;">Unidade</span>
<div style="left:986px;top:288px;width:66px;height:19px;background:#D6D3CE;"></div>
<div style="left:986px;top:288px;width:66px;height:1px;background:#D6D3CE;"></div>
<div style="left:986px;top:288px;width:1px;height:19px;background:#D6D3CE;"></div>
<div style="left:986px;top:306px;width:66px;height:1px;background:#404040;"></div>
<div style="left:1051px;top:288px;width:1px;height:19px;background:#404040;"></div>
<div style="left:987px;top:289px;width:64px;height:1px;background:#FFFFFF;"></div>
<div style="left:987px;top:289px;width:1px;height:17px;background:#FFFFFF;"></div>
<div style="left:987px;top:305px;width:64px;height:1px;background:#808080;"></div>
<div style="left:1050px;top:289px;width:1px;height:17px;background:#808080;"></div>
<span class="t" style="left:991.82px;top:292px;font-size:11px;line-height:11px;transform:scaleX(0.9918);transform-origin:0 0;">Vl. Unitário</span>
<div style="left:1052px;top:288px;width:71px;height:19px;background:#D6D3CE;"></div>
<div style="left:1052px;top:288px;width:71px;height:1px;background:#D6D3CE;"></div>
<div style="left:1052px;top:288px;width:1px;height:19px;background:#D6D3CE;"></div>
<div style="left:1052px;top:306px;width:71px;height:1px;background:#404040;"></div>
<div style="left:1122px;top:288px;width:1px;height:19px;background:#404040;"></div>
<div style="left:1053px;top:289px;width:69px;height:1px;background:#FFFFFF;"></div>
<div style="left:1053px;top:289px;width:1px;height:17px;background:#FFFFFF;"></div>
<div style="left:1053px;top:305px;width:69px;height:1px;background:#808080;"></div>
<div style="left:1121px;top:289px;width:1px;height:17px;background:#808080;"></div>
<span class="t" style="left:1055.66px;top:292px;font-size:11px;line-height:11px;transform:scaleX(0.9888);transform-origin:0 0;">Vl. Total Item</span>
<div style="left:1123px;top:288px;width:81px;height:19px;background:#D6D3CE;"></div>
<div style="left:1123px;top:288px;width:81px;height:1px;background:#D6D3CE;"></div>
<div style="left:1123px;top:288px;width:1px;height:19px;background:#D6D3CE;"></div>
<div style="left:1123px;top:306px;width:81px;height:1px;background:#404040;"></div>
<div style="left:1203px;top:288px;width:1px;height:19px;background:#404040;"></div>
<div style="left:1124px;top:289px;width:79px;height:1px;background:#FFFFFF;"></div>
<div style="left:1124px;top:289px;width:1px;height:17px;background:#FFFFFF;"></div>
<div style="left:1124px;top:305px;width:79px;height:1px;background:#808080;"></div>
<div style="left:1202px;top:289px;width:1px;height:17px;background:#808080;"></div>
<span class="t" style="left:1139.19px;top:292px;font-size:11px;line-height:11px;transform:scaleX(0.9900);transform-origin:0 0;">Vl. Tabela</span>
<div style="left:522px;top:309px;width:682px;height:17px;background:#C8DEC8;"></div>
<span class="t" style="left:474.17px;top:311px;font-size:11px;line-height:11px;">8270542</span>
<span class="t" style="left:558.52px;top:311px;font-size:11px;line-height:11px;">2938</span>
<span class="t" style="left:588.00px;top:311px;font-size:11px;line-height:11px;transform:scaleX(0.9595);transform-origin:0 0;">SORVETE PEGA MAIS MARTA ROCHA 1,5 LT</span>
<span class="t" style="left:835.23px;top:311px;font-size:11px;line-height:11px;">13,3300</span>
<span class="t" style="left:914.88px;top:311px;font-size:11px;line-height:11px;">1</span>
<span class="t" style="left:947.41px;top:311px;font-size:11px;line-height:11px;transform:scaleX(0.9550);transform-origin:0 0;">UN</span>
<span class="t" style="left:1009.23px;top:311px;font-size:11px;line-height:11px;">15,5289</span>
<span class="t" style="left:1086.34px;top:311px;font-size:11px;line-height:11px;">207,00</span>
<span class="t" style="left:1173.47px;top:311px;font-size:11px;line-height:11px;">15,53</span>
<div style="left:522px;top:331px;width:682px;height:17px;background:#F6F283;"></div>
<span class="t" style="left:474.17px;top:333px;font-size:11px;line-height:11px;">8270542</span>
<span class="t" style="left:588.00px;top:333px;font-size:11px;line-height:11px;transform:scaleX(0.9585);transform-origin:0 0;">SORVETE TRIGELADO 1 5L CARIOCA</span>
<span class="t" style="left:835.23px;top:333px;font-size:11px;line-height:11px;">20,0000</span>
<span class="t" style="left:914.88px;top:333px;font-size:11px;line-height:11px;">1</span>
<span class="t" style="left:947.41px;top:333px;font-size:11px;line-height:11px;transform:scaleX(0.9550);transform-origin:0 0;">UN</span>
<span class="t" style="left:1009.23px;top:333px;font-size:11px;line-height:11px;">24,0600</span>
<span class="t" style="left:1086.34px;top:333px;font-size:11px;line-height:11px;">481,20</span>
<div style="left:522px;top:352px;width:682px;height:17px;background:#C8DEC8;"></div>
<span class="t" style="left:474.17px;top:354px;font-size:11px;line-height:11px;">8270542</span>
<span class="t" style="left:558.52px;top:354px;font-size:11px;line-height:11px;">2940</span>
<span class="t" style="left:588.00px;top:354px;font-size:11px;line-height:11px;transform:scaleX(0.9594);transform-origin:0 0;">SORVETE PEGA MAIS NAPOLITANO 1,5 LTS</span>
<span class="t" style="left:841.34px;top:354px;font-size:11px;line-height:11px;">8,8900</span>
<span class="t" style="left:914.88px;top:354px;font-size:11px;line-height:11px;">1</span>
<span class="t" style="left:947.41px;top:354px;font-size:11px;line-height:11px;transform:scaleX(0.9550);transform-origin:0 0;">UN</span>
<span class="t" style="left:1009.23px;top:354px;font-size:11px;line-height:11px;">15,5289</span>
<span class="t" style="left:1086.34px;top:354px;font-size:11px;line-height:11px;">138,05</span>
<span class="t" style="left:1173.47px;top:354px;font-size:11px;line-height:11px;">15,53</span>
<div style="left:522px;top:374px;width:682px;height:17px;background:#F6F283;"></div>
<span class="t" style="left:474.17px;top:376px;font-size:11px;line-height:11px;">8270542</span>
<span class="t" style="left:588.00px;top:376px;font-size:11px;line-height:11px;transform:scaleX(0.9581);transform-origin:0 0;">SORVETE TRIGELADO 1 5L NAPOLITANO</span>
<span class="t" style="left:835.23px;top:376px;font-size:11px;line-height:11px;">50,0000</span>
<span class="t" style="left:914.88px;top:376px;font-size:11px;line-height:11px;">1</span>
<span class="t" style="left:947.41px;top:376px;font-size:11px;line-height:11px;transform:scaleX(0.9550);transform-origin:0 0;">UN</span>
<span class="t" style="left:1009.23px;top:376px;font-size:11px;line-height:11px;">24,0600</span>
<span class="t" style="left:1077.17px;top:376px;font-size:11px;line-height:11px;">1.203,00</span>
<div style="left:522px;top:396px;width:682px;height:17px;background:#F6F283;"></div>
<span class="t" style="left:474.17px;top:398px;font-size:11px;line-height:11px;">8270542</span>
<span class="t" style="left:588.00px;top:398px;font-size:11px;line-height:11px;transform:scaleX(0.9587);transform-origin:0 0;">SORVETE TRIGELADO 1 5L CREME</span>
<span class="t" style="left:835.23px;top:398px;font-size:11px;line-height:11px;">10,0000</span>
<span class="t" style="left:914.88px;top:398px;font-size:11px;line-height:11px;">1</span>
<span class="t" style="left:947.41px;top:398px;font-size:11px;line-height:11px;transform:scaleX(0.9550);transform-origin:0 0;">UN</span>
<span class="t" style="left:1009.23px;top:398px;font-size:11px;line-height:11px;">24,0600</span>
<span class="t" style="left:1086.34px;top:398px;font-size:11px;line-height:11px;">240,60</span>
<div style="left:522px;top:417px;width:682px;height:17px;background:#C8DEC8;"></div>
<span class="t" style="left:474.17px;top:419px;font-size:11px;line-height:11px;">8270542</span>
<span class="t" style="left:558.52px;top:419px;font-size:11px;line-height:11px;">2939</span>
<span class="t" style="left:588.00px;top:419px;font-size:11px;line-height:11px;transform:scaleX(0.9600);transform-origin:0 0;">SORVETE PEGA MAIS FLOCOS 1,5 LTS</span>
<span class="t" style="left:841.34px;top:419px;font-size:11px;line-height:11px;">8,8900</span>
<span class="t" style="left:914.88px;top:419px;font-size:11px;line-height:11px;">1</span>
<span class="t" style="left:947.41px;top:419px;font-size:11px;line-height:11px;transform:scaleX(0.9550);transform-origin:0 0;">UN</span>
<span class="t" style="left:1009.23px;top:419px;font-size:11px;line-height:11px;">15,5289</span>
<span class="t" style="left:1086.34px;top:419px;font-size:11px;line-height:11px;">138,05</span>
<span class="t" style="left:1173.47px;top:419px;font-size:11px;line-height:11px;">15,53</span>
<div style="left:454px;top:617px;width:750px;height:17px;background:#EAE8E4"></div>
<div style="left:454px;top:617px;width:16px;height:17px;background:#D6D3CE;"></div>
<div style="left:454px;top:617px;width:16px;height:1px;background:#D6D3CE;"></div>
<div style="left:454px;top:617px;width:1px;height:17px;background:#D6D3CE;"></div>
<div style="left:454px;top:633px;width:16px;height:1px;background:#404040;"></div>
<div style="left:469px;top:617px;width:1px;height:17px;background:#404040;"></div>
<div style="left:455px;top:618px;width:14px;height:1px;background:#FFFFFF;"></div>
<div style="left:455px;top:618px;width:1px;height:15px;background:#FFFFFF;"></div>
<div style="left:455px;top:632px;width:14px;height:1px;background:#808080;"></div>
<div style="left:468px;top:618px;width:1px;height:15px;background:#808080;"></div>
<svg style="position:absolute;left:459px;top:621px" width="5" height="8"><path d="M4 0V8L0 4Z" fill="#000"/></svg>
<div style="left:1188px;top:617px;width:16px;height:17px;background:#D6D3CE;"></div>
<div style="left:1188px;top:617px;width:16px;height:1px;background:#D6D3CE;"></div>
<div style="left:1188px;top:617px;width:1px;height:17px;background:#D6D3CE;"></div>
<div style="left:1188px;top:633px;width:16px;height:1px;background:#404040;"></div>
<div style="left:1203px;top:617px;width:1px;height:17px;background:#404040;"></div>
<div style="left:1189px;top:618px;width:14px;height:1px;background:#FFFFFF;"></div>
<div style="left:1189px;top:618px;width:1px;height:15px;background:#FFFFFF;"></div>
<div style="left:1189px;top:632px;width:14px;height:1px;background:#808080;"></div>
<div style="left:1202px;top:618px;width:1px;height:15px;background:#808080;"></div>
<svg style="position:absolute;left:1194px;top:621px" width="5" height="8"><path d="M0 0V8L4 4Z" fill="#000"/></svg>
<div style="left:470px;top:617px;width:504px;height:17px;background:#D6D3CE;"></div>
<div style="left:470px;top:617px;width:504px;height:1px;background:#D6D3CE;"></div>
<div style="left:470px;top:617px;width:1px;height:17px;background:#D6D3CE;"></div>
<div style="left:470px;top:633px;width:504px;height:1px;background:#404040;"></div>
<div style="left:973px;top:617px;width:1px;height:17px;background:#404040;"></div>
<div style="left:471px;top:618px;width:502px;height:1px;background:#FFFFFF;"></div>
<div style="left:471px;top:618px;width:1px;height:15px;background:#FFFFFF;"></div>
<div style="left:471px;top:632px;width:502px;height:1px;background:#808080;"></div>
<div style="left:972px;top:618px;width:1px;height:15px;background:#808080;"></div>
</body></html>
